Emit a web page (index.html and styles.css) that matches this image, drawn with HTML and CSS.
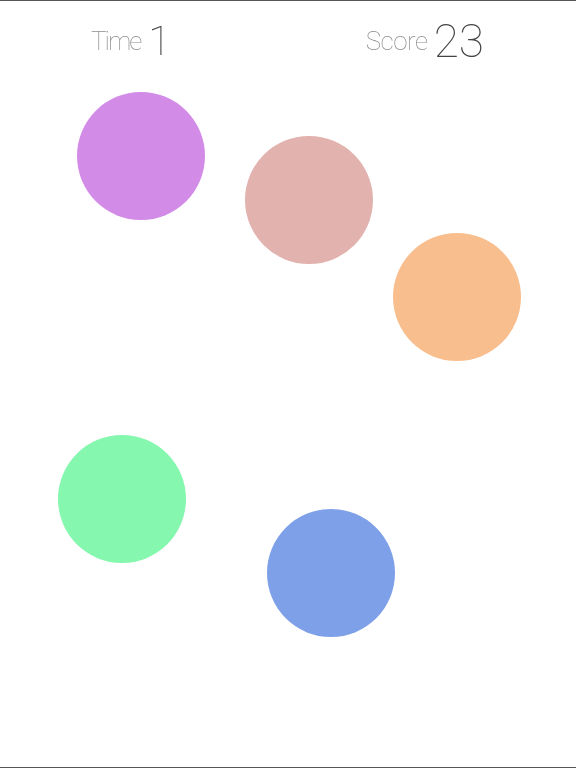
FILE: index.html
```html
<!DOCTYPE html>
<html>
<head>
<meta charset="utf-8">
<link rel="stylesheet" href="styles.css">
</head>
<body>
<div class="screen">
  <header class="hud">
    <div class="stat"><span class="label label-time">Time</span><span class="value value-time">1</span></div>
    <div class="stat"><span class="label label-score">Score</span><span class="value value-score">23</span></div>
  </header>
  <div class="board">
    <div class="dot dot-purple"></div>
    <div class="dot dot-pink"></div>
    <div class="dot dot-orange"></div>
    <div class="dot dot-green"></div>
    <div class="dot dot-blue"></div>
  </div>
</div>
</body>
</html>
```
FILE: styles.css
```css
html, body {
  margin: 0;
  padding: 0;
  background: #fff;
}
.screen {
  width: 576px;
  height: 768px;
  box-sizing: border-box;
  border-top: 1px solid #555;
  border-bottom: 1px solid #555;
  position: relative;
  overflow: hidden;
  font-family: Roboto, "Liberation Sans", sans-serif;
  font-weight: 100;
  -webkit-font-smoothing: antialiased;
}
.hud {
  display: flex;
  justify-content: space-between;
  align-items: center;
  padding: 0 92px 0 91px;
  height: 80px;
  box-sizing: border-box;
  will-change: transform;
}
.stat {
  display: flex;
  align-items: center;
  line-height: 1;
}
.label {
  font-size: 26px;
  color: #8c8c8c;
}
.label-time {
  letter-spacing: -2px;
}
.label-score {
  letter-spacing: -0.5px;
}
.value {
  color: #454545;
}
.value-time {
  font-size: 41px;
  margin-left: 8px;
}
.value-score {
  font-size: 46px;
  margin-left: 6px;
}
.board {
  position: absolute;
  inset: 0;
}
.dot {
  position: absolute;
  width: 128px;
  height: 128px;
  border-radius: 50%;
}
.dot-purple { left: 77px; top: 91px; background: #d38be8; }
.dot-pink { left: 245px; top: 135px; background: #e2b2ae; }
.dot-orange { left: 393px; top: 232px; background: #f8be8e; }
.dot-green { left: 58px; top: 434px; background: #85f7ae; }
.dot-blue { left: 267px; top: 508px; background: #7ea0e8; }
```
